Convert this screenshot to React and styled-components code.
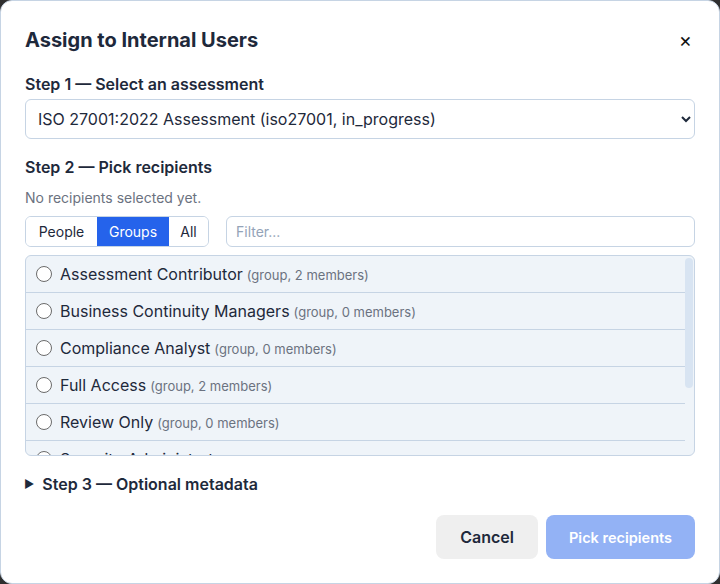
import React from 'react';
import styled, { createGlobalStyle } from 'styled-components';

const GlobalStyle = createGlobalStyle`
  html, body {
    margin: 0;
    padding: 0;
    background: #2f2f2f;
  }
  body {
    font-family: Inter, 'Noto Sans', sans-serif;
    color: #1e293b;
  }
  * { box-sizing: border-box; }
`;

const Dialog = styled.div`
  width: 720px;
  height: 584px;
  background: #fff;
  border: 1px solid #c6d4e4;
  border-radius: 12px;
  padding: 0 24px;
  display: flex;
  flex-direction: column;
`;

const Header = styled.div`
  display: flex;
  justify-content: space-between;
  align-items: center;
  padding-top: 27px;
  height: 51px;

  h2 {
    margin: 0;
    font-size: 20px;
    font-weight: 700;
    line-height: 24px;
  }
`;

const CloseButton = styled.button`
  border: none;
  background: none;
  font-family: inherit;
  font-size: 20px;
  line-height: 20px;
  color: #111;
  padding: 0;
  margin-right: 3px;
  cursor: pointer;
`;

const StepLabel = styled.div`
  font-size: 16px;
  font-weight: 600;
  line-height: 20px;
  margin-top: ${p => p.$mt || 0}px;
`;

const Select = styled.select`
  margin-top: 5px;
  width: 100%;
  height: 40px;
  border: 1px solid #c6d4e4;
  border-radius: 6px;
  background: #fff;
  font-family: inherit;
  font-size: 16px;
  color: #1e293b;
  padding: 0 6px 0 8px;
`;

const Hint = styled.div`
  margin-top: 12px;
  font-size: 14px;
  line-height: 18px;
  color: #6b7280;
`;

const Toolbar = styled.div`
  display: flex;
  gap: 17px;
  margin-top: 9px;
  height: 31px;
`;

const Segmented = styled.div`
  display: flex;
  border: 1px solid #c6d4e4;
  border-radius: 6px;
  overflow: hidden;
`;

const SegButton = styled.button`
  border: none;
  background: ${p => (p.$active ? '#2563eb' : '#fff')};
  color: ${p => (p.$active ? '#fff' : '#1e293b')};
  font-family: inherit;
  font-size: 14px;
  padding: 0 11px;
  width: ${p => p.$w}px;
`;

const Filter = styled.input`
  flex: 1;
  border: 1px solid #c6d4e4;
  border-radius: 6px;
  font-family: inherit;
  font-size: 14px;
  padding: 0 9px;
  color: #1e293b;
  &::placeholder { color: #94a3b8; }
`;

const List = styled.div`
  margin-top: 8px;
  height: 201px;
  border: 1px solid #c6d4e4;
  border-radius: 6px;
  background: #eff4f9;
  overflow: hidden;
  display: flex;
`;

const Rows = styled.div`
  flex: 1;
`;

const Row = styled.label`
  display: flex;
  align-items: center;
  height: 37px;
  padding: 0 10px;
  border-bottom: 1px solid #c6d4e4;
  font-size: 16px;
  gap: 8px;

  small {
    font-size: 13px;
    color: #6b7280;
    margin-left: 4px;
  }
`;

const Radio = styled.span`
  width: 16px;
  height: 16px;
  border-radius: 50%;
  border: 1px solid #6b6b6b;
  background: #fff;
  flex-shrink: 0;
`;

const Scrollbar = styled.div`
  width: 8px;
  padding-top: 2px;
  margin-right: 1px;

  div {
    height: 130px;
    border-radius: 4px;
    background: #d8e4f2;
  }
`;

const Details = styled.div`
  margin-top: 18px;
  display: flex;
  align-items: center;
  gap: 8px;
  font-size: 16px;
  font-weight: 600;
  line-height: 20px;

  span.tri {
    font-size: 11px;
    margin-left: -1px;
  }
`;

const Footer = styled.div`
  display: flex;
  justify-content: flex-end;
  gap: 8px;
  margin-top: 21px;
`;

const Button = styled.button`
  height: 44px;
  border: none;
  border-radius: 8px;
  font-family: inherit;
  font-weight: 600;
  padding: 0 ${p => p.$px}px;
  background: ${p => (p.$primary ? '#93b2f5' : '#efefef')};
  color: ${p => (p.$primary ? '#fff' : '#1e293b')};
  font-size: ${p => (p.$primary ? 14.5 : 16)}px;
`;

const groups = [
  ['Assessment Contributor', 2],
  ['Business Continuity Managers', 0],
  ['Compliance Analyst', 0],
  ['Full Access', 2],
  ['Review Only', 0],
  ['Security Administrators', 1],
];

export default function App() {
  return (
    <>
      <GlobalStyle />
      <Dialog>
        <Header>
          <h2>Assign to Internal Users</h2>
          <CloseButton>×</CloseButton>
        </Header>
        <StepLabel $mt={22}>Step 1 — Select an assessment</StepLabel>
        <Select defaultValue="iso">
          <option value="iso">ISO 27001:2022 Assessment (iso27001, in_progress)</option>
        </Select>
        <StepLabel $mt={18}>Step 2 — Pick recipients</StepLabel>
        <Hint>No recipients selected yet.</Hint>
        <Toolbar>
          <Segmented>
            <SegButton $w={71}>People</SegButton>
            <SegButton $w={72} $active>Groups</SegButton>
            <SegButton $w={39}>All</SegButton>
          </Segmented>
          <Filter placeholder="Filter..." />
        </Toolbar>
        <List>
          <Rows>
            {groups.map(([name, n]) => (
              <Row key={name}>
                <Radio />
                <span>
                  {name}
                  <small>(group, {n} {n === 1 ? 'member' : 'members'})</small>
                </span>
              </Row>
            ))}
          </Rows>
          <Scrollbar><div /></Scrollbar>
        </List>
        <Details>
          <span className="tri">▶</span>
          Step 3 — Optional metadata
        </Details>
        <Footer>
          <Button $px={24}>Cancel</Button>
          <Button $px={23} $primary>Pick recipients</Button>
        </Footer>
      </Dialog>
    </>
  );
}
